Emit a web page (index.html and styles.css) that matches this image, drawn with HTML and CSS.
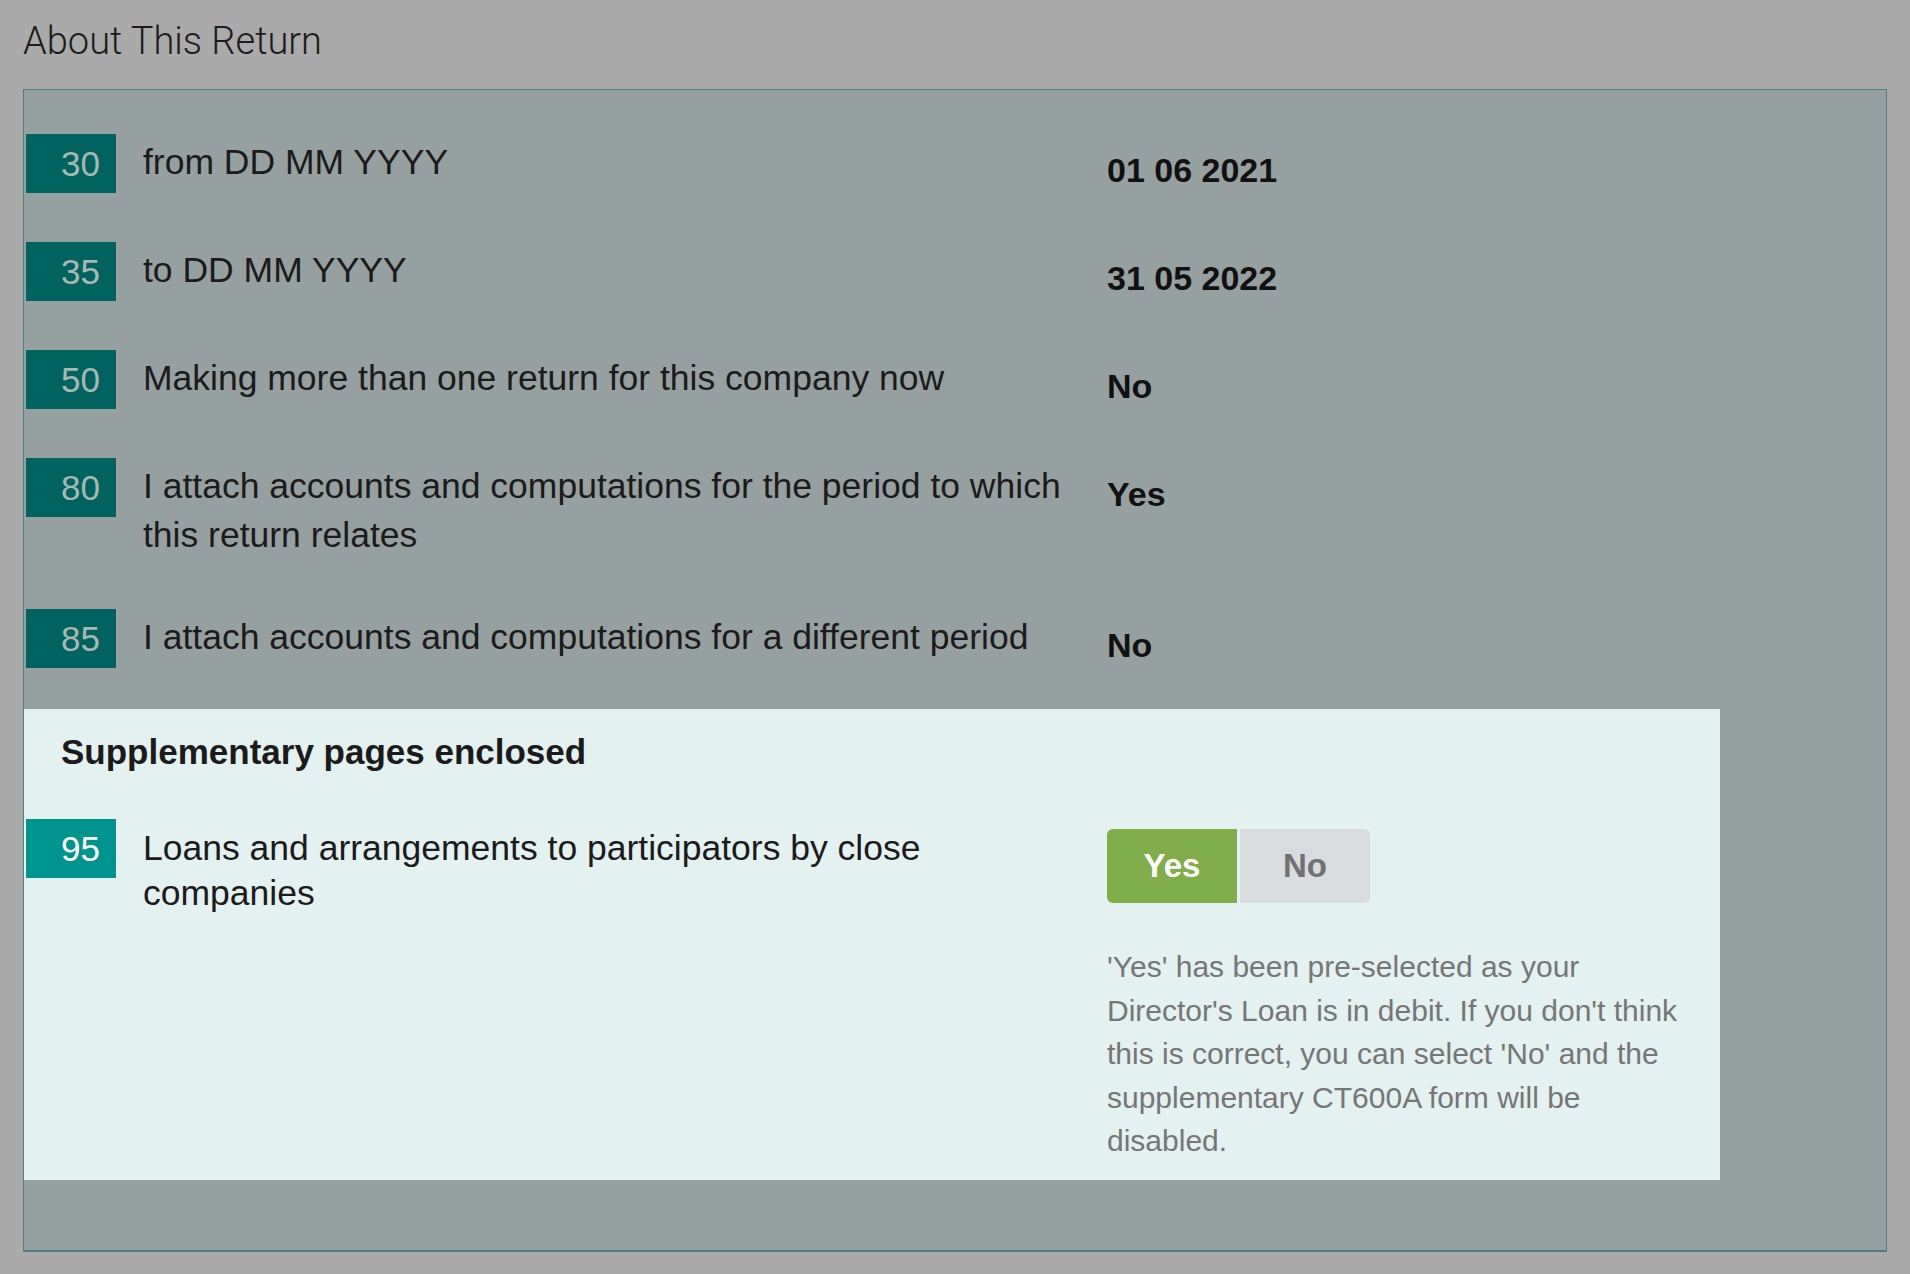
FILE: index.html
```html
<!DOCTYPE html>
<html lang="en">
<head>
<meta charset="utf-8">
<title>About This Return</title>
<link rel="stylesheet" href="styles.css">
</head>
<body>
<div class="page">
  <h1 class="title">About This Return</h1>
  <section class="panel">
    <div class="rows">
      <div class="row">
        <div class="badge">30</div>
        <div class="label">from DD MM YYYY</div>
        <div class="value">01 06 2021</div>
      </div>
      <div class="row">
        <div class="badge">35</div>
        <div class="label">to DD MM YYYY</div>
        <div class="value">31 05 2022</div>
      </div>
      <div class="row">
        <div class="badge">50</div>
        <div class="label">Making more than one return for this company now</div>
        <div class="value">No</div>
      </div>
      <div class="row">
        <div class="badge">80</div>
        <div class="label">I attach accounts and computations for the period to which this return relates</div>
        <div class="value">Yes</div>
      </div>
      <div class="row">
        <div class="badge">85</div>
        <div class="label">I attach accounts and computations for a different period</div>
        <div class="value">No</div>
      </div>
    </div>
    <div class="supp">
      <h2 class="supp-title">Supplementary pages enclosed</h2>
      <div class="row">
        <div class="badge badge-active">95</div>
        <div class="label label-supp">Loans and arrangements to participators by close companies</div>
        <div class="control">
          <div class="toggle">
            <span class="toggle-btn toggle-yes">Yes</span>
            <span class="toggle-btn toggle-no">No</span>
          </div>
          <p class="helper">'Yes' has been pre-selected as your Director's Loan is in debit. If you don't think this is correct, you can select 'No' and the supplementary CT600A form will be disabled.</p>
        </div>
      </div>
    </div>
  </section>
</div>
</body>
</html>
```
FILE: styles.css
```css
html, body {
  margin: 0;
  padding: 0;
  background: #aaaaaa;
}

body {
  font-family: "Liberation Sans", Arial, Helvetica, sans-serif;
  color: #1b1b1b;
}

.page {
  padding: 19px 23px 0 23px;
}

.title {
  margin: 0 0 26px 0;
  font-family: Roboto, "Liberation Sans", sans-serif;
  font-weight: 300;
  font-size: 38px;
  line-height: 44px;
  color: #1c1c1c;
}

.panel {
  background: #97a0a1;
  border: 1px solid #4b7f7f;
  border-bottom-width: 2px;
  padding: 44px 0 70px 0;
}

.rows {
  display: flex;
  flex-direction: column;
  gap: 49px;
}

.row {
  display: flex;
  align-items: flex-start;
  margin-left: 2px;
}

.badge {
  flex: 0 0 auto;
  width: 90px;
  height: 59px;
  box-sizing: border-box;
  padding-right: 16px;
  background: #00635f;
  color: #a9b7b5;
  font-size: 35px;
  line-height: 59px;
  text-align: right;
}

.badge-active {
  background: #00948f;
  color: #ffffff;
}

.label {
  flex: 0 0 auto;
  width: 930px;
  margin-left: 27px;
  padding-top: 4px;
  font-size: 35.5px;
  line-height: 49px;
  color: #1b1b1b;
}

.value {
  margin-left: 34px;
  padding-top: 16px;
  font-size: 34px;
  font-weight: 700;
  line-height: 40px;
  color: #111111;
}

.supp {
  margin-top: 41px;
  width: 1696px;
  background: #e3f1f0;
  padding: 20px 0 17px 0;
}

.supp-title {
  margin: 0 0 45px 37px;
  font-size: 35px;
  font-weight: 700;
  line-height: 45px;
  color: #1b1b1b;
}

.label-supp {
  padding-top: 7px;
  line-height: 45px;
}

.control {
  margin-left: 34px;
  padding-top: 10px;
}

.toggle {
  display: flex;
  gap: 3px;
}

.toggle-btn {
  width: 130px;
  height: 74px;
  display: flex;
  align-items: center;
  justify-content: center;
  font-size: 33px;
  font-weight: 700;
}

.toggle-yes {
  background: #80ae4a;
  color: #ffffff;
  border-radius: 6px 0 0 6px;
}

.toggle-no {
  background: #d8dcdf;
  color: #717171;
  border-radius: 0 6px 6px 0;
}

.helper {
  margin: 42px 0 0 0;
  width: 590px;
  font-size: 30px;
  line-height: 43.5px;
  color: #767676;
}
```
